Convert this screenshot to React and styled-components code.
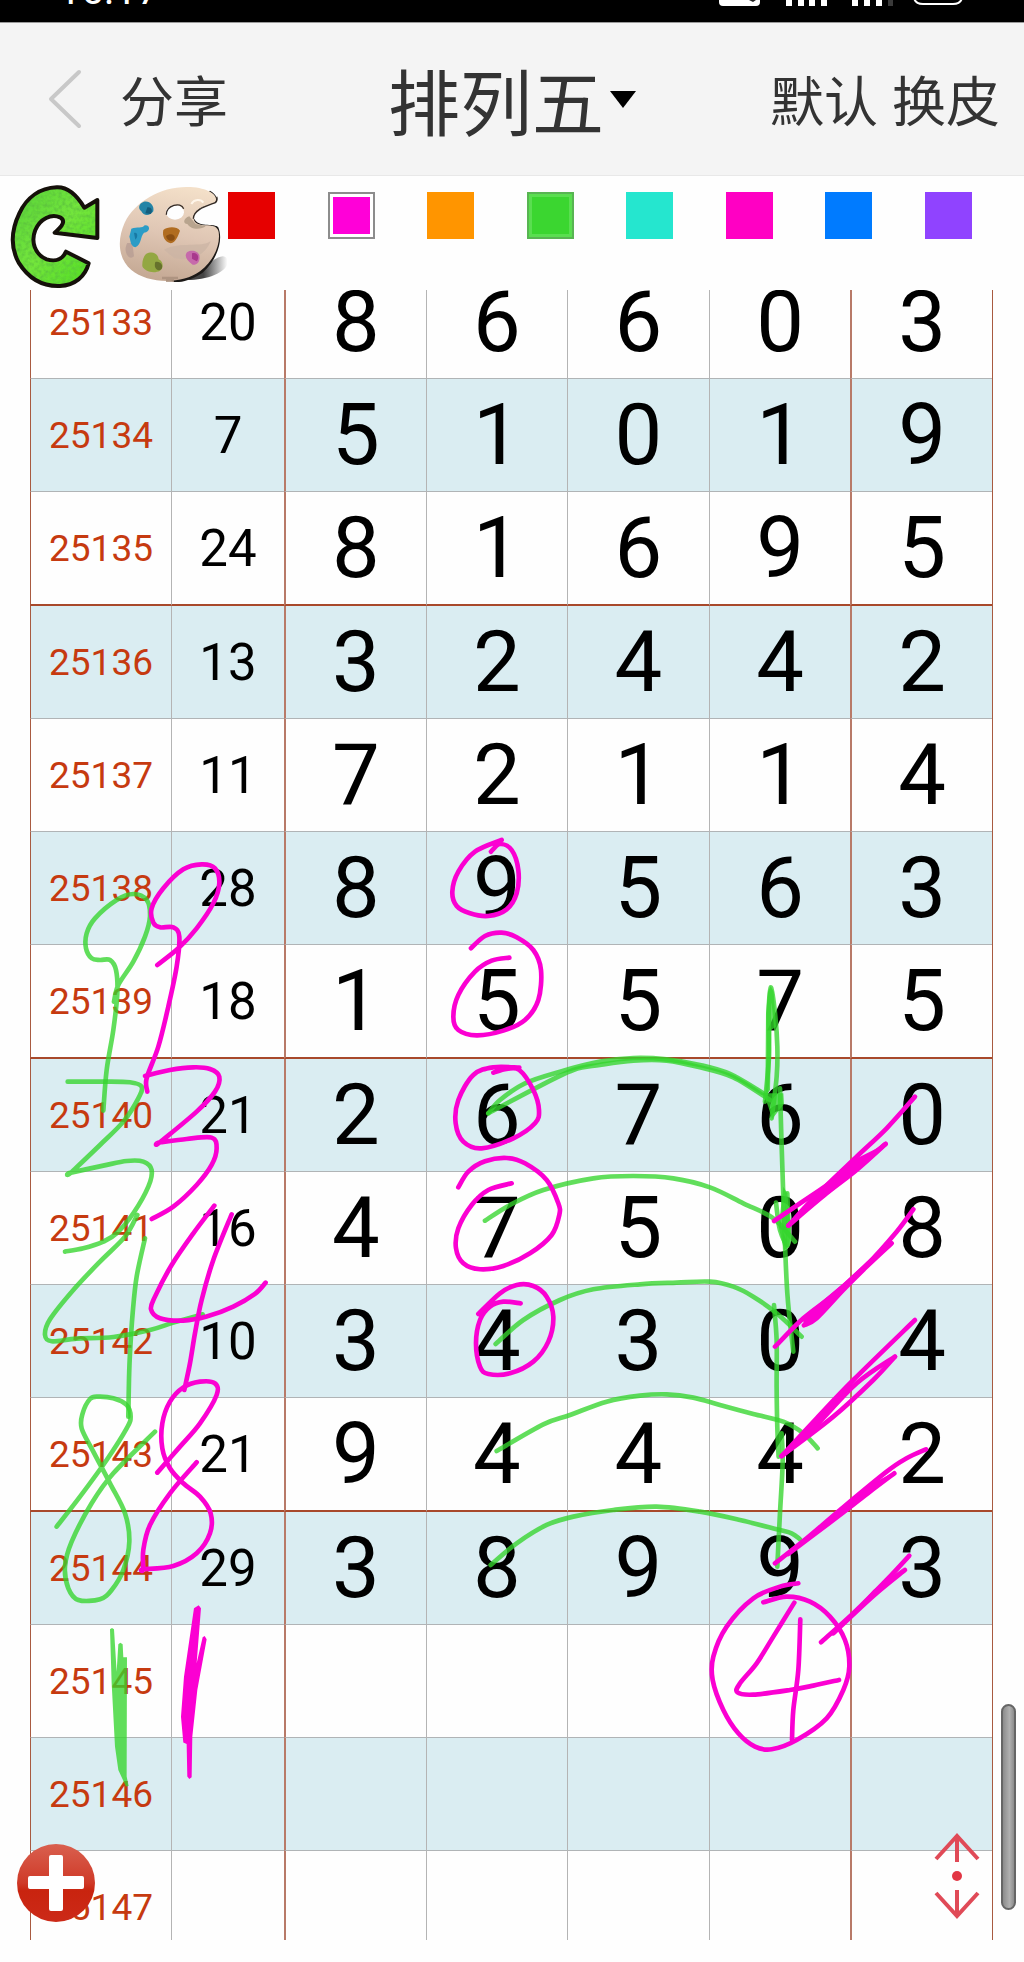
import { useState } from "react";
import styled, { createGlobalStyle, css } from "styled-components";

const draws = [
  { issue: "25133", sum: 20, digits: [8, 6, 6, 0, 3] },
  { issue: "25134", sum: 7, digits: [5, 1, 0, 1, 9] },
  { issue: "25135", sum: 24, digits: [8, 1, 6, 9, 5] },
  { issue: "25136", sum: 13, digits: [3, 2, 4, 4, 2] },
  { issue: "25137", sum: 11, digits: [7, 2, 1, 1, 4] },
  { issue: "25138", sum: 28, digits: [8, 9, 5, 6, 3] },
  { issue: "25139", sum: 18, digits: [1, 5, 5, 7, 5] },
  { issue: "25140", sum: 21, digits: [2, 6, 7, 6, 0] },
  { issue: "25141", sum: 16, digits: [4, 7, 5, 0, 8] },
  { issue: "25142", sum: 10, digits: [3, 4, 3, 0, 4] },
  { issue: "25143", sum: 21, digits: [9, 4, 4, 4, 2] },
  { issue: "25144", sum: 29, digits: [3, 8, 9, 9, 3] },
  { issue: "25145" },
  { issue: "25146" },
  { issue: "25147" },
];

const pens = [
  { name: "红", color: "#e60000" },
  { name: "洋红", color: "#ff00d8" },
  { name: "橙", color: "#ff9500" },
  { name: "绿", color: "#3bd630", rim: "#58b552" },
  { name: "青", color: "#25e6cf" },
  { name: "粉", color: "#ff00c3" },
  { name: "蓝", color: "#007bff" },
  { name: "紫", color: "#9043ff" },
];

const GREEN = "#35d52d";
const PINK = "#fb00d2";

// Pen strokes, three units to a pixel, grouped by the tile they were drawn in.
const tiles = [
  {
    x: 0,
    y: 820,
    green: [
      "342,545 355,495 400,425 435,350 450,290 440,240 400,222 350,240 285,295 260,340 258,385 275,415 300,420 330,420 348,450 352,520 340,630 320,750 310,872",
      "203,785 310,785 390,787 425,800 415,835 370,905 300,975 213,1058 213,1058 310,1037 380,1023 430,1025 455,1050 445,1100 400,1180 350,1240 310,1265 250,1285 195,1295",
      "412,1185 375,1250 300,1325 220,1410 150,1498 135,1545 155,1564 230,1556 340,1551 450,1530 520,1508 608,1483",
      "435,1255 410,1370 398,1480 390,1600 387,1680 385,1790",
    ],
    pink: [
      "472,435 535,385 590,325 640,250 658,190 645,145 605,133 550,148 490,205 455,265 460,308 480,322 520,322 538,350 530,440 505,560 475,680 440,775 442,815",
      "435,768 510,750 580,742 630,747 658,770 645,815 590,875 480,967 480,967 560,957 635,953 650,985 635,1035 590,1095 520,1160 455,1197",
      "643,1157 580,1240 515,1335 465,1430 453,1468 480,1495 550,1502 620,1490 700,1460 765,1422 797,1388",
      "695,1183 640,1320 605,1440 585,1540 570,1630 553,1710",
    ],
  },
  {
    x: 0,
    y: 1300,
    green: [
      "170,680 240,590 320,480 380,385 392,350 380,315 340,295 295,290 270,297 248,340 245,385 280,455 330,550 375,640 388,725 370,810 335,870 300,898 235,900 205,865 195,800 215,725 275,610 340,520 465,395",
    ],
    pink: [
      "472,518 540,440 600,370 650,285 645,250 600,245 550,262 510,305 487,370 487,445 510,505 550,550 600,590 632,640 630,700 590,760 520,798 430,808 430,808 430,750 450,675 510,580 590,487",
    ],
    greenFill: [
      "330,988 336,984 342,988 350,1115 355,1033 361,1028 368,1033 370,1072 381,1072 380,1430 386,1458 378,1460 355,1410 345,1340 335,1150",
    ],
    pinkFill: [
      "582,925 596,916 603,925 590,1090 608,1012 614,1008 620,1018 592,1170 577,1310 575,1432 568,1437 562,1430 560,1332 550,1328 543,1250 552,1130",
    ],
  },
  {
    x: 400,
    y: 820,
    green: [
      "265,880 300,840 375,790 480,755 600,725 700,714 800,718 900,735 990,762 1090,820",
      "265,880 400,808 520,750 600,735 700,722 800,722 900,742 1000,772 1110,840",
    ],
    pink: [
      "273,95 300,72 335,90 355,150 350,220 320,268 265,288 210,280 170,258 157,215 175,155 225,95 305,60",
      "213,385 255,348 305,338 350,352 400,390 423,450 415,540 375,600 310,632 230,646 175,630 160,590 175,525 225,455 275,422 328,413",
      "280,758 320,747 358,750 400,810 417,870 405,910 340,955 245,985 190,965 167,910 175,840 220,765 280,742 358,743",
      "175,1102 205,1055 255,1024 320,1014 375,1030 440,1080 475,1150 478,1185 455,1245 390,1300 310,1338 240,1348 190,1330 168,1285 175,1225 215,1155 265,1110 335,1090",
    ],
  },
  {
    x: 400,
    y: 1180,
    green: [
      "255,122 330,75 430,30 580,-5 700,-12 820,-5 930,22 1030,70 1120,115 1185,185",
      "287,492 370,420 480,360 580,328 720,313 830,308 930,305 1000,320 1060,350 1130,400 1205,470",
      "290,813 430,733 510,705 620,665 720,647 800,643 880,653 960,675 1060,702 1150,725 1210,760 1253,805",
      "272,1155 350,1090 440,1035 520,1010 640,990 770,980 900,995 1020,1020 1130,1048 1175,1060 1200,1078",
      "1122,375 1130,480 1130,620 1132,740 1136,830",
      "1145,760 1148,850 1140,1000 1132,1160",
    ],
    pink: [
      "362,370 310,365 270,380 240,420 228,490 240,560 265,582 330,580 400,545 445,485 460,410 440,350 400,318 350,315 300,340 235,402",
    ],
  },
  {
    x: 700,
    y: 960,
    green: [
      "195,425 207,290 206,160 212,82 224,150 232,260 230,350 215,475",
      "240,385 245,560 252,770 262,1000 280,1175",
      "228,728 240,810 265,850 262,700",
    ],
    greenFill: [
      "204,95 212,78 221,95 228,200 214,210 210,390 196,410 198,160",
      "190,400 250,400 252,432 216,478 205,440",
      "250,680 262,700 272,800 268,862 252,870 236,800",
    ],
    pink: [
      "645,410 560,505 470,590 350,705 265,797",
      "222,783 360,690 480,610 557,552",
      "557,552 470,630 380,700 265,797",
      "640,748 590,815 500,915 400,1005 310,1075 225,1160",
      "575,850 500,920 430,990 350,1075 312,1096",
    ],
    pinkFill: [
      "265,797 345,700 460,600 557,552 470,635",
      "575,850 500,905 430,970 310,1070 310,1098 350,1080 440,985",
    ],
  },
  {
    x: 640,
    y: 1380,
    pink: [
      "825,-180 640,0 530,115 425,228",
      "765,-70 700,0 580,110 425,228",
      "765,-70 650,10 520,145 425,228",
      "858,208 800,235 740,275 600,390 500,475 405,550",
      "763,280 690,335 600,405 445,522",
      "808,527 740,600 640,700 543,787",
      "795,570 700,648 580,760",
      "475,610 420,620 340,655 260,740 220,830 218,900 250,990 295,1060 345,1100 395,1108 470,1080 560,1015 610,930 628,860 615,780 570,710 510,665 440,650 370,667",
      "463,668 400,770 350,850 300,910 292,937 340,944 450,930 520,917 597,900",
      "481,718 475,870 460,990 456,1080",
    ],
    pinkFill: [
      "425,228 530,115 650,0 550,110",
      "763,275 690,315 570,410 445,522 620,395",
      "795,560 700,630 620,720 580,760",
    ],
  },
];

// Catmull-Rom through the recorded points
const toPath = (text) => {
  const p = text.split(" ").map((pair) => pair.split(",").map(Number));
  let d = `M${p[0]}`;
  for (let i = 0; i < p.length - 1; i++) {
    const a = p[i - 1] || p[i];
    const b = p[i];
    const c = p[i + 1];
    const e = p[i + 2] || c;
    const c1 = [b[0] + (c[0] - a[0]) / 6, b[1] + (c[1] - a[1]) / 6];
    const c2 = [c[0] - (e[0] - b[0]) / 6, c[1] - (e[1] - b[1]) / 6];
    d += `C${c1} ${c2} ${c}`;
  }
  return d;
};

const Ink = ({ color, lines = [], shapes = [], opacity }) => (
  <>
    {lines.map((line) => (
      <path
        key={line}
        d={toPath(line)}
        fill="none"
        stroke={color}
        strokeWidth="14"
        strokeLinecap="round"
        strokeLinejoin="round"
        opacity={opacity}
      />
    ))}
    {shapes.map((shape) => (
      <polygon key={shape} points={shape} fill={color} opacity={opacity} />
    ))}
  </>
);

const Marks = () => (
  <MarkLayer viewBox="0 290 1024 1650" aria-hidden="true">
    {tiles.map((t) => (
      <g key={`g${t.x}-${t.y}`} transform={`translate(${t.x} ${t.y}) scale(0.3333)`}>
        <Ink color={GREEN} lines={t.green} shapes={t.greenFill} opacity="0.78" />
      </g>
    ))}
    {tiles.map((t) => (
      <g key={`p${t.x}-${t.y}`} transform={`translate(${t.x} ${t.y}) scale(0.3333)`}>
        <Ink color={PINK} lines={t.pink} shapes={t.pinkFill} />
      </g>
    ))}
  </MarkLayer>
);

const StatusIcons = () => (
  <svg width="244" height="6" viewBox="0 0 244 6" aria-hidden="true">
    <path d="M0 0H41V2Q41 6 37 6H4Q0 6 0 2Z" fill="#fff" />
    <path d="M30 0H37L34 2Z" fill="#222" />
    <path
      d="M67 0h6v6h-6zM79 0h6v6h-6zM90 0h6v6h-6zM102 0h6v6h-6zM133 0h6v6h-6zM145 0h6v6h-6zM157 0h6v6h-6z"
      fill="#fff"
    />
    <path d="M169 0h5v6h-5z" fill="#3a3a3a" />
    <path d="M195 -4Q195 4 204 4H234Q243 4 243 -4" fill="none" stroke="#fff" strokeWidth="2" />
  </svg>
);

const RefreshIcon = () => (
  <svg width="92" height="106" viewBox="32 552 276 318" aria-hidden="true">
    <defs>
      <linearGradient id="leaf" x1="0" y1="0" x2="1" y2="1">
        <stop offset="0" stopColor="#58d23a" />
        <stop offset="0.5" stopColor="#74e63c" />
        <stop offset="1" stopColor="#4fdc22" />
      </linearGradient>
      <filter id="grass" x="0" y="0" width="1" height="1">
        <feTurbulence type="fractalNoise" baseFrequency="0.09" numOctaves="2" />
        <feColorMatrix values="0 0 0 0 0.1  0 0 0 0 0.5  0 0 0 0 0.05  0 1.6 0 0 -0.6" />
        <feComposite in2="SourceGraphic" operator="in" result="speck" />
        <feMerge>
          <feMergeNode in="SourceGraphic" />
          <feMergeNode in="speck" />
        </feMerge>
      </filter>
    </defs>
    <path
      d="M172 562C122 564 82 592 60 640C36 690 32 740 58 788C88 836 132 860 182 858C226 856 258 830 268 790L200 755C190 778 168 786 142 778C106 764 94 724 108 690C122 656 156 640 182 652C200 662 190 678 166 698L294 714L294 600L255 623C235 590 210 560 172 562Z"
      fill="url(#leaf)"
      filter="url(#grass)"
    />
    <path
      d="M172 562C122 564 82 592 60 640C36 690 32 740 58 788C88 836 132 860 182 858C226 856 258 830 268 790L200 755C190 778 168 786 142 778C106 764 94 724 108 690C122 656 156 640 182 652C200 662 190 678 166 698L294 714L294 600L255 623C235 590 210 560 172 562Z"
      fill="none"
      stroke="#15100a"
      strokeWidth="12"
      strokeLinejoin="round"
    />
  </svg>
);

const PaletteIcon = () => (
  <svg width="110" height="102" viewBox="352 548 330 306" aria-hidden="true">
    <defs>
      <linearGradient id="wood" x1="0.6" y1="0" x2="0.4" y2="1">
        <stop offset="0" stopColor="#f3dfc8" />
        <stop offset="0.5" stopColor="#dfc6b4" />
        <stop offset="1" stopColor="#c4a893" />
      </linearGradient>
      <linearGradient id="shade" x1="0" y1="0" x2="1" y2="0">
        <stop offset="0.4" stopColor="#444" />
        <stop offset="1" stopColor="#fff" />
      </linearGradient>
    </defs>
    <path d="M560 836C620 836 690 810 680 775C672 755 650 770 640 775Z" fill="url(#shade)" />
    <path
      fillRule="evenodd"
      fill="#1c1917"
      d="M628 568C650 580 656 600 640 610C610 614 584 628 580 650C590 680 640 665 652 676C668 710 655 770 605 815C570 838 540 844 520 842L400 780Z"
    />
    <path
      fillRule="evenodd"
      fill="url(#wood)"
      d="M560 557C480 556 404 600 372 664C350 712 350 770 392 806C440 846 540 852 598 810C638 778 660 734 654 692C650 676 640 672 610 672C588 670 572 660 582 636C596 612 632 612 644 602C656 582 620 557 560 557Z"
    />
    <ellipse cx="523" cy="633" rx="27" ry="22" fill="#fefefe" />
    <path d="M497 640C497 612 540 600 549 622" fill="none" stroke="#332a24" strokeWidth="4" />
    <path d="M578 648C582 622 612 614 648 602L652 676C630 664 596 676 578 648Z" fill="#fefefe" />
    <path d="M578 652C578 626 612 616 644 604Q652 596 648 586" fill="none" stroke="#332a24" strokeWidth="4" />
    <path d="M380 725C365 750 385 780 400 765L395 725Z" fill="#b39a92" opacity="0.7" />
    <path d="M490 745C540 720 600 740 630 720C610 770 560 780 520 770Z" fill="#cbb3a4" opacity="0.7" />
    <path d="M566 645C548 650 546 668 560 668C575 690 605 682 615 675L585 668Z" fill="#b8a48e" />
    <path d="M572 608C580 594 600 592 608 604" fill="none" stroke="#fff6ea" strokeWidth="6" />
    <path d="M428 602C445 596 462 612 458 630C448 645 428 644 422 630C410 620 416 606 428 602Z" fill="#2484a6" />
    <path d="M440 618C452 616 458 628 450 638L434 636Z" fill="#145d7c" />
    <path d="M392 682C410 676 425 682 432 672C450 670 450 692 430 694C418 706 424 728 404 738C388 734 390 715 386 706Z" fill="#2b9cc6" />
    <path d="M400 695C410 690 414 705 404 715Z" fill="#1879a4" />
    <path d="M488 686C500 676 528 674 538 688C532 704 526 722 510 726C492 722 484 704 488 686Z" fill="#b06c20" />
    <path d="M496 704C510 694 524 700 522 712C514 724 498 718 496 704Z" fill="#8a4e12" />
    <path d="M436 758C455 748 472 756 474 774C488 780 490 800 478 808C460 818 430 810 425 795C424 780 428 766 436 758Z" fill="#93a742" />
    <path d="M464 782C478 778 490 792 482 804C470 812 458 800 464 782Z" fill="#66712c" />
    <path d="M560 752C572 744 592 748 596 762C600 780 588 792 576 790C556 776 550 762 560 752Z" fill="#c66aab" />
    <path d="M574 756C590 750 598 768 588 780L574 772Z" fill="#a8388c" />
    <path d="M484 826H532V834H520V842H496V834H484Z" fill="#a88e7c" opacity="0.8" />
  </svg>
);

const App = () => {
  const [pen, setPen] = useState("洋红");

  return (
    <Page>
      <GlobalStyle />
      <StatusBar>
        <Clock>16:17</Clock>
        <StatusIcons />
      </StatusBar>

      <Header>
        <HeaderSide>
          <HeaderButton aria-label="返回">
            <svg width="34" height="60" viewBox="0 0 34 60" aria-hidden="true">
              <path
                d="M31 3L3 30L31 57"
                fill="none"
                stroke="#c8c8c8"
                strokeWidth="4"
                strokeLinecap="round"
                strokeLinejoin="round"
              />
            </svg>
          </HeaderButton>
          <HeaderButton>分享</HeaderButton>
        </HeaderSide>
        <Title>
          <TitleButton>
            排列五
            <Caret />
          </TitleButton>
        </Title>
        <HeaderSide $end>
          <HeaderButton>默认</HeaderButton>
          <HeaderButton>换皮</HeaderButton>
        </HeaderSide>
      </Header>

      <Toolbar>
        <ToolButton aria-label="刷新">
          <RefreshIcon />
        </ToolButton>
        <ToolButton aria-label="调色板">
          <PaletteIcon />
        </ToolButton>
        <Swatches>
          {pens.map(({ name, color, rim }) => (
            <Swatch
              key={name}
              aria-label={name}
              aria-pressed={pen === name}
              $color={color}
              $rim={rim}
              $active={pen === name}
              onClick={() => setPen(name)}
            />
          ))}
        </Swatches>
      </Toolbar>

      <Board>
        <Chart>
          <colgroup>
            <Col $width="141px" />
            <Col $width="113px" />
            <Col />
            <Col />
            <Col />
            <Col />
            <Col />
          </colgroup>
          <tbody>
            {draws.map(({ issue, sum, digits = ["", "", "", "", ""] }, row) => (
              <Row key={issue} $shaded={row % 2 === 1} $last={row % 4 === 2}>
                <IssueCell scope="row">{issue}</IssueCell>
                <SumCell>{sum}</SumCell>
                {digits.map((digit, i) => (
                  <DigitCell key={i} $strong={i === 0 || i === 4}>
                    {digit}
                  </DigitCell>
                ))}
              </Row>
            ))}
          </tbody>
        </Chart>
        <Marks />
        <AddButton aria-label="添加">
          <svg width="56" height="56" viewBox="0 0 56 56" aria-hidden="true">
            <path
              d="M23 0h10q2 0 2 2v19h19q2 0 2 2v9q0 2-2 2H35v20q0 2-2 2H23q-2 0-2-2V34H2q-2 0-2-2v-9q0-2 2-2h19V2q0-2 2-2z"
              fill="#fff"
            />
          </svg>
        </AddButton>
        <JumpButton aria-label="上下滚动">
          <svg width="46" height="88" viewBox="0 0 46 88" aria-hidden="true">
            <g fill="none" stroke="#e04a57" strokeWidth="4">
              <path d="M2 27L23 4L44 27M23 4V30M2 61L23 84L44 61M23 84V58" />
            </g>
            <circle cx="23" cy="44" r="5" fill="#e23644" />
          </svg>
        </JumpButton>
        <ScrollThumb />
      </Board>
    </Page>
  );
};

const GlobalStyle = createGlobalStyle`
  *,
  *::before,
  *::after {
    box-sizing: border-box;
  }

  body {
    margin: 0;
    background-color: #fefefe;
    font-family: Roboto, "Noto Sans CJK SC", sans-serif;
    color: #000;
  }

  button {
    margin: 0;
    padding: 0;
    border: none;
    background: none;
    font: inherit;
    color: inherit;
    cursor: pointer;
  }

  svg {
    display: block;
  }
`;

const Page = styled.div`
  display: flex;
  flex-direction: column;
  height: 100vh;
  padding-bottom: 22px;
`;

const StatusBar = styled.div`
  display: flex;
  justify-content: space-between;
  flex: none;
  height: 23px;
  padding: 0 61px 12px 58px;
  overflow: hidden;
  border-bottom: 1px solid #999;
  background-color: #000;
`;

const Clock = styled.span`
  align-self: flex-end;
  font-size: 41px;
  line-height: 40px;
  color: #fff;
`;

const Header = styled.header`
  display: grid;
  grid-template-columns: 1fr auto 1fr;
  align-items: center;
  flex: none;
  height: 153px;
  padding: 0 24px 0 48px;
  border-bottom: 1px solid #e8e8e8;
  background-color: #f4f4f4;
  font-family: "Noto Sans CJK SC", sans-serif;
  color: #333;
`;

const HeaderSide = styled.div`
  display: flex;
  align-items: center;
  gap: ${(props) => (props.$end ? "14px" : "38px")};
  justify-content: ${(props) => (props.$end ? "flex-end" : "flex-start")};
`;

const HeaderButton = styled.button`
  font-size: 54px;
  line-height: 80px;
`;

const Title = styled.h1`
  margin: 0 24px 0 0;
  font-size: 72px;
  font-weight: 400;
  line-height: 104px;
`;

const TitleButton = styled.button`
  display: flex;
  align-items: center;
  gap: 6px;
`;

const Caret = styled.span`
  border: 13px solid transparent;
  border-top: 17px solid #000;
  border-bottom: none;
`;

const Toolbar = styled.div`
  display: flex;
  align-items: flex-start;
  flex: none;
  height: 114px;
  padding: 8px 52px 0 10px;
`;

const ToolButton = styled.button`
  flex: none;

  & + & {
    margin-left: 16px;
  }
`;

const Swatches = styled.div`
  display: flex;
  flex: 1;
  justify-content: space-between;
  padding-top: 8px;
`;

const Swatch = styled.button`
  width: 47px;
  height: 47px;
  background-color: ${(props) => props.$color};

  ${(props) =>
    props.$rim &&
    css`
      border: 2px solid ${props.$rim};
      box-shadow: inset 0 0 0 3px #5ade50;
    `}

  ${(props) =>
    props.$active &&
    css`
      border: 2px solid #8c8c8c;
      box-shadow: inset 0 0 0 3px #fff;
    `}
`;

const Board = styled.main`
  position: relative;
  flex: 1;
  min-height: 0;
  padding: 0 31px 0 30px;
  overflow: hidden;
`;

/* scrolled a little way into the first row */
const Chart = styled.table`
  width: 100%;
  margin-top: -24px;
  table-layout: fixed;
  border-collapse: separate;
  border-spacing: 0;
  border-right: 1px solid #a85a40;
`;

const Col = styled.col`
  width: ${(props) => props.$width || "auto"};
`;

const Cell = css`
  padding: 0;
  border-left: 1px solid #b4b4b4;
  border-bottom: 1px solid #b0b4b6;
  text-align: center;
  font-weight: 400;
`;

const IssueCell = styled.th`
  ${Cell}
  border-left-color: #a85a40;
  font-size: 37px;
  color: #c63a10;
`;

const SumCell = styled.td`
  ${Cell}
  font-size: 51px;
`;

const DigitCell = styled.td`
  ${Cell}
  font-size: 85px;
  line-height: 100px;

  ${(props) =>
    props.$strong &&
    css`
      border-left: 2px solid #b87a68;
    `}
`;

const Row = styled.tr`
  height: ${(props) => (props.$last ? "114px" : "113px")};
  background-color: ${(props) => (props.$shaded ? "#daedf2" : "#fefefe")};

  ${(props) =>
    props.$last &&
    css`
      & > * {
        border-bottom: 2px solid #a8492b;
      }
    `}
`;

const MarkLayer = styled.svg`
  position: absolute;
  inset: 0;
  width: 100%;
  height: 100%;
  pointer-events: none;
`;

const AddButton = styled.button`
  position: absolute;
  left: 17px;
  bottom: 18px;
  display: grid;
  place-items: center;
  width: 78px;
  height: 78px;
  border-radius: 50%;
  background: linear-gradient(#d9604f, #cf3a28 50%, #c9240f 60%, #cc2a18);
`;

const JumpButton = styled.button`
  position: absolute;
  right: 44px;
  bottom: 20px;
`;

const ScrollThumb = styled.div`
  position: absolute;
  right: 8px;
  bottom: 30px;
  width: 15px;
  height: 206px;
  border: 2px solid #666;
  border-radius: 8px;
  background: linear-gradient(90deg, #8c8c8c, #b0b0b0 60%, #8c8c8c);
`;

export default App;
